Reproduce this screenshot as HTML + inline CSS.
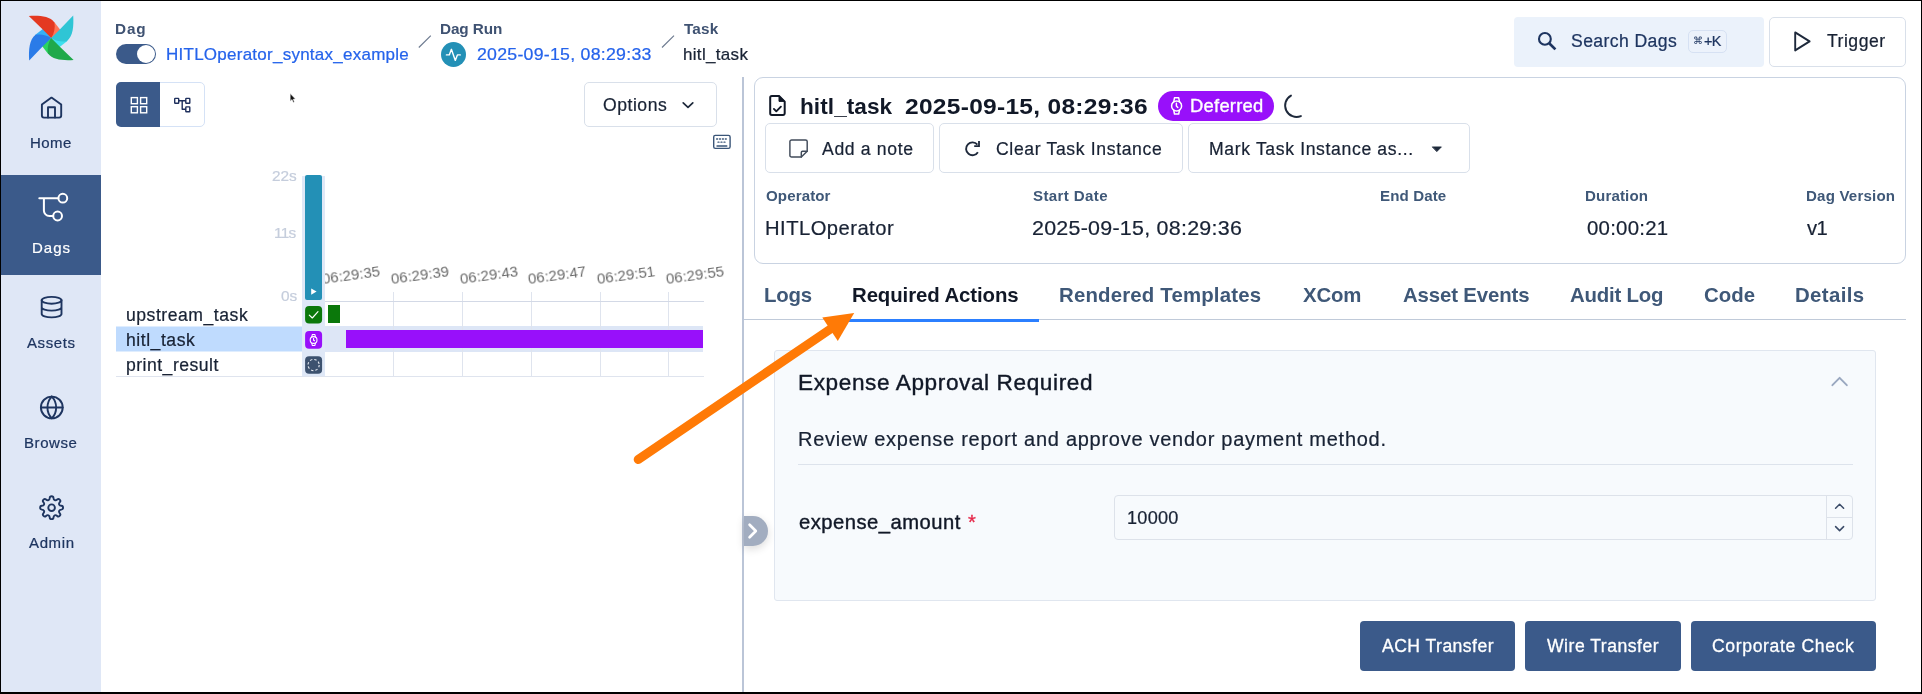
<!DOCTYPE html>
<html><head><meta charset="utf-8">
<style>
*{box-sizing:border-box;margin:0;padding:0}
html,body{width:1922px;height:694px;overflow:hidden;background:#fff}
body{font-family:"Liberation Sans",sans-serif;color:#1e293b;position:relative}
.abs{position:absolute}
.t{position:absolute;white-space:nowrap;line-height:1;will-change:transform}
svg{position:absolute;overflow:visible}
#frame{position:absolute;left:0;top:0;width:1922px;height:694px;border:1px solid #000;border-bottom-width:2px;z-index:50;pointer-events:none}
#side{position:absolute;left:1px;top:1px;width:100px;height:692px;background:#dfe7f6}
.btn{position:absolute;border:1px solid #d9e0ea;border-radius:5px;background:#fff}
.solid{position:absolute;background:#3b5a8a;border-radius:4px}
.tl{position:absolute;white-space:nowrap;line-height:1;font-size:15px;color:#6b6b6b;transform-origin:0 100%;transform:rotate(-7.8deg);will-change:transform}
.gl{position:absolute;width:1px;background:#dfe4ee;top:292px;height:85px}
</style></head><body>
<div id="side">
  <div class="abs" style="left:0;top:174px;width:100px;height:100px;background:#3b5a8a"></div>
</div>
<!-- logo -->
<svg style="left:0;top:0" width="102" height="76" viewBox="0 0 102 76">
 <g transform="translate(51.2,38)">
  <g transform="rotate(0)"><path d="M1,-16.4 L3.2,-15.8 L9.4,-7.8 L0,0.4 L-1,-8 Z" fill="#ff7557"/></g>
  <g transform="rotate(90)"><path d="M1,-16.4 L3.2,-15.8 L9.4,-7.8 L0,0.4 L-1,-8 Z" fill="#3de0ee"/></g>
  <g transform="rotate(180)"><path d="M1,-16.4 L3.2,-15.8 L9.4,-7.8 L0,0.4 L-1,-8 Z" fill="#2bd45f"/></g>
  <g transform="rotate(270)"><path d="M1,-16.4 L3.2,-15.8 L9.4,-7.8 L0,0.4 L-1,-8 Z" fill="#35b0f5"/></g>
  <g transform="rotate(0)"><path d="M-22.4,-22 C-12,-22.6 -1.5,-22 3.2,-15.6 C4.2,-10.5 3,-4.5 0,0 L-8.4,-8.6 Z" fill="#e43921"/></g>
  <g transform="rotate(90)"><path d="M-22.4,-22 C-12,-22.6 -1.5,-22 3.2,-15.6 C4.2,-10.5 3,-4.5 0,0 L-8.4,-8.6 Z" fill="#2fc5d5"/></g>
  <g transform="rotate(180)"><path d="M-22.4,-22 C-12,-22.6 -1.5,-22 3.2,-15.6 C4.2,-10.5 3,-4.5 0,0 L-8.4,-8.6 Z" fill="#1fa94a"/></g>
  <g transform="rotate(270)"><path d="M-22.4,-22 C-12,-22.6 -1.5,-22 3.2,-15.6 C4.2,-10.5 3,-4.5 0,0 L-8.4,-8.6 Z" fill="#2a7be8"/></g>
 </g>
</svg>
<!-- sidebar icons -->
<svg style="left:0;top:0" width="102" height="694" viewBox="0 0 102 694" fill="none" stroke="#1e3560" stroke-width="1.9" stroke-linecap="round" stroke-linejoin="round">
 <!-- home -->
 <path d="M41.9,104.6 L51.5,97.6 L61.2,104.6 V115.6 a2,2 0 0 1 -2,2 H43.9 a2,2 0 0 1 -2,-2 Z"/>
 <path d="M48,117.6 V107.2 h7 V117.6"/>
 <!-- dags -->
 <g stroke="#fff" stroke-width="2">
  <circle cx="62.8" cy="198.2" r="4.4"/><circle cx="57.6" cy="216" r="4.4"/>
  <path d="M39.3,198.2 H58.4 M43.9,198.2 V210.5 a5.5,5.5 0 0 0 5.5,5.5 H53.2"/>
 </g>
 <!-- assets -->
 <ellipse cx="51.6" cy="300.3" rx="9.9" ry="3.4"/>
 <path d="M41.7,300.3 V314 a9.9,3.4 0 0 0 19.8,0 V300.3 M41.7,307.2 a9.9,3.4 0 0 0 19.8,0"/>
 <!-- browse -->
 <circle cx="51.8" cy="407.5" r="10.9"/>
 <path d="M40.9,407.5 H62.7 M51.8,396.6 a15.8,15.8 0 0 0 0,21.8 a15.8,15.8 0 0 0 0,-21.8"/>
 <!-- admin -->
 <circle cx="51.6" cy="507.7" r="3.3"/>
 <path id="gear" d="M49.72,497.94 Q49.79,496.24 51.60,496.24 Q53.41,496.24 53.48,497.94 Q53.54,499.63 54.74,500.13 Q55.94,500.62 57.18,499.47 Q58.42,498.32 59.70,499.60 Q60.98,500.88 59.83,502.12 Q58.68,503.36 59.17,504.56 Q59.67,505.76 61.36,505.82 Q63.06,505.89 63.06,507.70 Q63.06,509.51 61.36,509.58 Q59.67,509.64 59.17,510.84 Q58.68,512.04 59.83,513.28 Q60.98,514.52 59.70,515.80 Q58.42,517.08 57.18,515.93 Q55.94,514.78 54.74,515.27 Q53.54,515.77 53.48,517.46 Q53.41,519.16 51.60,519.16 Q49.79,519.16 49.72,517.46 Q49.66,515.77 48.46,515.27 Q47.26,514.78 46.02,515.93 Q44.78,517.08 43.50,515.80 Q42.22,514.52 43.37,513.28 Q44.52,512.04 44.03,510.84 Q43.53,509.64 41.84,509.58 Q40.14,509.51 40.14,507.70 Q40.14,505.89 41.84,505.82 Q43.53,505.76 44.03,504.56 Q44.52,503.36 43.37,502.12 Q42.22,500.88 43.50,499.60 Q44.78,498.32 46.02,499.47 Q47.26,500.62 48.46,500.13 Q49.66,499.63 49.72,497.94 Z"/>
</svg>

<!-- header -->
<div class="abs" style="left:116px;top:44px;width:40px;height:20px;border-radius:10px;background:#3b5a8a"><div class="abs" style="left:21.4px;top:1.1px;width:17.5px;height:17.8px;border-radius:9px;background:#fff"></div></div>
<svg style="left:0;top:0" width="760" height="76" viewBox="0 0 760 76" fill="none" stroke="#6f7d92" stroke-width="1.2">
 <path d="M418.8,47.5 L430.8,35.6 M662,47.5 L674,35.6"/>
 <circle cx="453.5" cy="54.5" r="12.5" fill="#2390b6" stroke="none"/>
 <path d="M446.4,54.9 h2.9 l2.1,-5.6 l3.9,11.1 l2.1,-5.5 h2.9" stroke="#fff" stroke-width="1.4" stroke-linejoin="round" stroke-linecap="round"/>
</svg>

<div class="abs" style="left:1514px;top:17px;width:250px;height:50px;border-radius:4px;background:#ebf2fb"></div>
<div class="abs" style="left:1688px;top:30px;width:39px;height:22.5px;border:1px solid #d6e1f3;border-radius:5px;background:#ecf2fb"></div>
<div class="btn" style="left:1769px;top:17px;width:137px;height:50px"></div>
<svg style="left:1500px;top:0" width="422" height="76" viewBox="1500 0 422 76" fill="none" stroke="#1e3560" stroke-width="2.1" stroke-linecap="round" stroke-linejoin="round">
 <circle cx="1544.9" cy="38.9" r="5.9"/><path d="M1549.2,43.2 L1555.4,49.4" stroke-width="2.7" stroke-linecap="butt"/>
 <path d="M1795.2,32.4 L1809.6,41.4 L1795.2,50.4 Z" stroke="#1e293b" stroke-width="1.9"/>
</svg>

<!-- left panel -->
<div class="btn" style="left:116px;top:82px;width:89px;height:45px;border-color:#d5e2f6"></div>
<div class="abs" style="left:116px;top:82px;width:44px;height:45px;background:#3b5a8a;border-radius:5px 0 0 5px"></div>
<svg style="left:105px;top:75px" width="240" height="60" viewBox="105 75 240 60" fill="none" stroke-width="1.4">
 <g stroke="#fff"><rect x="131.3" y="97.6" width="6.1" height="6.1"/><rect x="140.6" y="97.6" width="6.1" height="6.1"/><rect x="131.3" y="106.7" width="6.1" height="6.1"/><rect x="140.6" y="106.7" width="6.1" height="6.1"/></g>
 <g stroke="#1e2f5c" stroke-linejoin="round"><rect x="174.7" y="98.4" width="4" height="4.8" rx="0.5"/><rect x="185.8" y="98.4" width="4" height="4.8" rx="0.5"/><rect x="185.8" y="106.9" width="4" height="4.8" rx="0.5"/><path d="M178.7,100.8 H185.8 M182.2,100.8 V109.3 H185.8"/></g>
 <!-- cursor -->
 <path d="M290.2,93.6 L290.2,101.2 L292,99.6 L293.3,102.4 L294.4,101.9 L293.2,99.2 L295.4,99 Z" fill="#111" stroke="#fff" stroke-width="0.5"/>
</svg>
<div class="btn" style="left:584px;top:82px;width:133px;height:45px"></div>
<svg style="left:570px;top:75px" width="200" height="85" viewBox="570 75 200 85" fill="none" stroke="#1e293b" stroke-width="1.7" stroke-linecap="round" stroke-linejoin="round">
 <path d="M683.2,102.8 L688,107.4 L692.8,102.8"/>
 <g stroke="#3a5578" stroke-width="1.4"><rect x="713.7" y="135.4" width="16.4" height="13" rx="1.6"/><path d="M717,146 H726.8" /><path d="M716.6,139 h1 M719.5,139 h1 M722.4,139 h1 M725.3,139 h1 M718,142.2 h1 M721,142.2 h1 M724,142.2 h1" stroke-width="1.3"/></g>
</svg>

<!-- gantt -->
<svg style="left:116px;top:320px" width="186" height="40" viewBox="0 0 186 40"><rect x="0" y="6.5" width="186" height="25" fill="#bfdbfe"/></svg>
<div class="abs" style="left:302px;top:176px;width:23px;height:201px;background:#dfe8f7"></div>
<div class="abs" style="left:325px;top:326px;width:378px;height:26px;background:#dde6f6"></div>
<div class="abs" style="left:305px;top:175px;width:17px;height:124.5px;background:#2390b6;border-radius:2px"></div>
<div class="gl" style="left:393px"></div><div class="gl" style="left:462px"></div><div class="gl" style="left:531px"></div><div class="gl" style="left:599.5px"></div><div class="gl" style="left:668px"></div>
<div class="abs" style="left:325px;top:301px;width:378.5px;height:1.3px;background:#d3d9e6"></div>
<div class="abs" style="left:116px;top:376px;width:587.5px;height:1px;background:#dfe4ee"></div>
<div class="abs" style="left:328.2px;top:305px;width:12.2px;height:18px;background:#0b780b"></div>
<div class="abs" style="left:346.2px;top:330px;width:356.8px;height:18.3px;background:#9810fa"></div>
<div class="abs" style="left:325px;top:255px;width:420px;height:45px;overflow:hidden">
 <div class="tl" style="left:-2.2px;top:15.8px">06:29:35</div>
 <div class="tl" style="left:67.0px;top:15.8px">06:29:39</div>
 <div class="tl" style="left:135.7px;top:15.8px">06:29:43</div>
 <div class="tl" style="left:204.3px;top:15.8px">06:29:47</div>
 <div class="tl" style="left:273.2px;top:15.8px">06:29:51</div>
 <div class="tl" style="left:341.7px;top:15.8px">06:29:55</div>
</div>
<svg style="left:300px;top:280px" width="30" height="100" viewBox="300 280 30 100" fill="none" stroke-linecap="round" stroke-linejoin="round">
 <path d="M311.2,288.4 L316.6,291.6 L311.2,294.8 Z" fill="#fff"/>
 <rect x="305.1" y="306" width="17" height="17.6" rx="4" fill="#0b780b"/>
 <path d="M309.3,315.2 L312.3,318 L318,311.7" stroke="#fff" stroke-width="1.15"/>
 <rect x="305.1" y="331" width="17" height="17.8" rx="4" fill="#9810fa"/>
 <g stroke="#fff" stroke-width="1.1"><circle cx="313.6" cy="340" r="3.4"/><path d="M311.8,336.9 l0.5,-2.4 h2.6 l0.5,2.4 M311.8,343.1 l0.5,2.4 h2.6 l0.5,-2.4 M313.6,338.4 v1.8 l0.9,0.6"/></g>
 <rect x="305.1" y="356.2" width="17" height="17.6" rx="4" fill="#3d526f"/>
 <circle cx="313.6" cy="365" r="5.6" stroke="#e6ebf2" stroke-width="1.1" stroke-dasharray="2.4 2" stroke-linecap="butt"/>
</svg>

<div class="abs" style="left:742.3px;top:77px;width:1.7px;height:616px;background:#bbc5d7"></div>

<!-- right card -->
<div class="abs" style="left:754px;top:77px;width:1152px;height:186.5px;border:1px solid #c9d3e2;border-radius:9px"></div>
<div class="abs" style="left:1158px;top:91px;width:116px;height:30px;border-radius:15px;background:#9810fa"></div>
<div class="btn" style="left:765px;top:123px;width:169px;height:50px"></div>
<div class="btn" style="left:939px;top:123px;width:244px;height:50px"></div>
<div class="btn" style="left:1188px;top:123px;width:281.5px;height:50px"></div>
<svg style="left:750px;top:75px" width="750" height="110" viewBox="750 75 750 110" fill="none" stroke="#111827" stroke-width="1.7" stroke-linecap="round" stroke-linejoin="round">
 <!-- file check -->
 <g stroke-width="2"><path d="M779,95.9 H771.8 a1.6,1.6 0 0 0 -1.6,1.6 V113.3 a1.6,1.6 0 0 0 1.6,1.6 H783.1 a1.6,1.6 0 0 0 1.6,-1.6 V101.6 Z"/><path d="M779,96.2 V101.4 H784.4 Z" fill="#111827" stroke-width="1"/><path d="M773.9,108.9 l2.4,2.4 l4.6,-4.6" stroke-width="1.9"/></g>
 <!-- note -->
 <g stroke="#414b5a" stroke-width="1.45"><path d="M807.2,151.2 V141.6 a1.7,1.7 0 0 0 -1.7,-1.7 H791.6 a1.7,1.7 0 0 0 -1.7,1.7 V155.4 a1.7,1.7 0 0 0 1.7,1.7 H801.3 Z"/><path d="M801.3,157.1 V152.4 a1.2,1.2 0 0 1 1.2,-1.2 H807.2"/></g>
 <!-- refresh -->
 <g stroke="#1e293b" stroke-width="1.9" stroke-linecap="butt" stroke-linejoin="miter"><path d="M977.4,144.7 A6.4,6.4 0 1 0 977.9,152.2"/><path d="M979,140.9 V146.1 H974.2" stroke-width="1.8"/></g>
 <!-- watch in badge -->
 <g stroke="#fff" stroke-width="1.5"><circle cx="1176.6" cy="105.9" r="5"/><path d="M1173.7,101.8 l0.8,-4 h4.2 l0.8,4 M1173.7,110 l0.8,4 h4.2 l0.8,-4 M1176.4,103.3 v2.6 l1.4,1.5"/></g>
 <!-- spinner -->
 <path d="M1291,95.6 A11.4,11.4 0 0 0 1300.9,116.1" stroke="#1e293b" stroke-width="1.9"/>
 <!-- caret -->
 <path d="M1432.6,146.9 H1441.4 L1437,151.4 Z" fill="#1e293b" stroke="#1e293b" stroke-width="0.8"/>
</svg>

<!-- tabs -->
<div class="abs" style="left:744px;top:319px;width:1162px;height:1.2px;background:#c0cad9"></div>
<div class="abs" style="left:832px;top:319px;width:207px;height:3px;background:#2b7fff"></div>

<!-- accordion -->
<div class="abs" style="left:774px;top:350px;width:1102px;height:251px;border:1px solid #e0e6ef;border-radius:3px;background:#f7fafd"></div>
<div class="abs" style="left:798px;top:464px;width:1055px;height:1px;background:#dde3ec"></div>
<div class="abs" style="left:1114px;top:495px;width:739px;height:45px;border:1px solid #dde2ea;border-radius:4px"></div>
<div class="abs" style="left:1826px;top:495px;width:1px;height:45px;background:#dde2ea"></div>
<div class="abs" style="left:1826px;top:517px;width:27px;height:1px;background:#dde2ea"></div>
<svg style="left:1760px;top:340px" width="162" height="220" viewBox="1760 340 162 220" fill="none" stroke-linecap="round" stroke-linejoin="round">
 <path d="M1832.4,385.2 L1839.6,377.8 L1846.8,385.2" stroke="#9aa8c0" stroke-width="1.9"/>
 <path d="M1835.6,508.2 L1839.6,504.2 L1843.6,508.2 M1835.6,526.6 L1839.6,530.6 L1843.6,526.6" stroke="#3a4b68" stroke-width="1.5"/>
</svg>

<div class="solid" style="left:1360px;top:620.6px;width:155px;height:50px"></div>
<div class="solid" style="left:1525px;top:620.6px;width:156px;height:50px"></div>
<div class="solid" style="left:1691px;top:620.6px;width:185px;height:50px"></div>

<!-- handle -->
<div class="abs" style="left:744px;top:516px;width:24px;height:29.5px;border-radius:0 15px 15px 0;background:#a2adc0;box-shadow:0 3px 9px rgba(0,0,0,.14)"></div>
<svg style="left:740px;top:510px" width="40" height="40" viewBox="740 510 40 40" fill="none" stroke="#fff" stroke-width="2.7" stroke-linecap="round" stroke-linejoin="round"><path d="M749.6,524.7 L755.8,531 L749.6,537.3"/></svg>

<!-- arrow -->
<svg style="left:600px;top:290px;z-index:20" width="300" height="200" viewBox="600 290 300 200">
 <path d="M638.2,459.5 L834,326.6" stroke="#ff7a06" stroke-width="9" stroke-linecap="round" fill="none"/>
 <path d="M854.2,313 L822.3,317.6 L837.8,341 Z" fill="#ff7a06"/>
</svg>

<div class="t" style="left:30.10px;top:135px;font-size:15px;color:#1e3560;letter-spacing:0.443px;-webkit-text-stroke:0.22px #1e3560;">Home</div>
<div class="t" style="left:31.50px;top:240px;font-size:15px;color:#fff;letter-spacing:1.028px;-webkit-text-stroke:0.22px #fff;">Dags</div>
<div class="t" style="left:27.40px;top:335px;font-size:15px;color:#1e3560;letter-spacing:0.597px;-webkit-text-stroke:0.22px #1e3560;">Assets</div>
<div class="t" style="left:24.00px;top:435px;font-size:15px;color:#1e3560;letter-spacing:0.585px;-webkit-text-stroke:0.22px #1e3560;">Browse</div>
<div class="t" style="left:29.00px;top:535px;font-size:15px;color:#1e3560;letter-spacing:0.631px;-webkit-text-stroke:0.22px #1e3560;">Admin</div>
<div class="t" style="left:115.30px;top:21px;font-size:15.3px;font-weight:bold;color:#3f5272;letter-spacing:0.873px;">Dag</div>
<div class="t" style="left:165.90px;top:46px;font-size:17px;color:#2563eb;letter-spacing:0.251px;-webkit-text-stroke:0.22px #2563eb;">HITLOperator_syntax_example</div>
<div class="t" style="left:440.40px;top:21px;font-size:15.3px;font-weight:bold;color:#3f5272;letter-spacing:-0.107px;">Dag Run</div>
<div class="t" style="left:476.60px;top:46px;font-size:17px;color:#2563eb;letter-spacing:0.250px;transform:scaleX(1.0421);transform-origin:0 50%;-webkit-text-stroke:0.22px #2563eb;">2025-09-15, 08:29:33</div>
<div class="t" style="left:684.30px;top:21px;font-size:15.3px;font-weight:bold;color:#3f5272;letter-spacing:0.159px;">Task</div>
<div class="t" style="left:683.30px;top:46px;font-size:17px;color:#182234;letter-spacing:0.317px;-webkit-text-stroke:0.22px #182234;">hitl_task</div>
<div class="t" style="left:1570.70px;top:33px;font-size:17.6px;color:#1e3560;letter-spacing:0.409px;-webkit-text-stroke:0.22px #1e3560;">Search Dags</div>
<div class="t" style="left:1693.00px;top:36px;font-size:10px;color:#1e3560;letter-spacing:0.000px;font-family:"DejaVu Sans",sans-serif;-webkit-text-stroke:0;">⌘</div>
<div class="t" style="left:1703.50px;top:34px;font-size:14.4px;color:#1e3560;letter-spacing:-0.704px;-webkit-text-stroke:0.22px #1e3560;">+K</div>
<div class="t" style="left:1826.50px;top:33px;font-size:17.6px;color:#182234;letter-spacing:0.497px;-webkit-text-stroke:0.22px #182234;">Trigger</div>
<div class="t" style="left:603.40px;top:97px;font-size:17.6px;color:#182234;letter-spacing:0.527px;-webkit-text-stroke:0.22px #182234;">Options</div>
<div class="t" style="left:271.90px;top:168px;font-size:15.4px;color:#c5cddc;letter-spacing:-0.010px;-webkit-text-stroke:0.22px #c5cddc;">22s</div>
<div class="t" style="left:274.40px;top:225px;font-size:15.4px;color:#c5cddc;letter-spacing:-0.688px;-webkit-text-stroke:0.22px #c5cddc;">11s</div>
<div class="t" style="left:280.50px;top:288px;font-size:15.4px;color:#c5cddc;letter-spacing:-0.060px;-webkit-text-stroke:0.22px #c5cddc;">0s</div>
<div class="t" style="left:125.70px;top:307px;font-size:17.6px;color:#182234;letter-spacing:0.526px;-webkit-text-stroke:0.22px #182234;">upstream_task</div>
<div class="t" style="left:125.70px;top:332px;font-size:17.6px;color:#182234;letter-spacing:0.532px;-webkit-text-stroke:0.22px #182234;">hitl_task</div>
<div class="t" style="left:125.70px;top:357px;font-size:17.6px;color:#182234;letter-spacing:0.478px;-webkit-text-stroke:0.22px #182234;">print_result</div>
<div class="t" style="left:800.30px;top:96px;font-size:22.6px;font-weight:bold;color:#111827;letter-spacing:0.062px;">hitl_task</div>
<div class="t" style="left:904.50px;top:96px;font-size:22.6px;font-weight:bold;color:#111827;letter-spacing:0.250px;transform:scaleX(1.0864);transform-origin:0 50%;">2025-09-15, 08:29:36</div>
<div class="t" style="left:1190.20px;top:97px;font-size:18.4px;color:#fff;letter-spacing:0.254px;-webkit-text-stroke:0.35px #fff;">Deferred</div>
<div class="t" style="left:822.10px;top:141px;font-size:17.6px;color:#182234;letter-spacing:0.653px;-webkit-text-stroke:0.22px #182234;">Add a note</div>
<div class="t" style="left:995.90px;top:141px;font-size:17.6px;color:#182234;letter-spacing:0.643px;-webkit-text-stroke:0.22px #182234;">Clear Task Instance</div>
<div class="t" style="left:1209.00px;top:141px;font-size:17.6px;color:#182234;letter-spacing:0.643px;-webkit-text-stroke:0.22px #182234;">Mark Task Instance as...</div>
<div class="t" style="left:765.70px;top:188px;font-size:15.1px;font-weight:bold;color:#3f5878;letter-spacing:0.104px;">Operator</div>
<div class="t" style="left:1032.80px;top:188px;font-size:15.1px;font-weight:bold;color:#3f5878;letter-spacing:0.366px;">Start Date</div>
<div class="t" style="left:1380.40px;top:188px;font-size:15.1px;font-weight:bold;color:#3f5878;letter-spacing:0.111px;">End Date</div>
<div class="t" style="left:1585.00px;top:188px;font-size:15.1px;font-weight:bold;color:#3f5878;letter-spacing:0.139px;">Duration</div>
<div class="t" style="left:1805.60px;top:188px;font-size:15.1px;font-weight:bold;color:#3f5878;letter-spacing:0.178px;">Dag Version</div>
<div class="t" style="left:764.70px;top:218px;font-size:20.2px;color:#182234;letter-spacing:0.474px;-webkit-text-stroke:0.22px #182234;">HITLOperator</div>
<div class="t" style="left:1031.74px;top:218px;font-size:20.2px;color:#182234;letter-spacing:0.250px;transform:scaleX(1.0606);transform-origin:0 50%;-webkit-text-stroke:0.22px #182234;">2025-09-15, 08:29:36</div>
<div class="t" style="left:1586.60px;top:218px;font-size:20.2px;color:#182234;letter-spacing:0.250px;transform:scaleX(1.0099);transform-origin:0 50%;-webkit-text-stroke:0.22px #182234;">00:00:21</div>
<div class="t" style="left:1807.20px;top:218px;font-size:20.2px;color:#182234;letter-spacing:-0.494px;-webkit-text-stroke:0.22px #182234;">v1</div>
<div class="t" style="left:763.50px;top:285px;font-size:20.4px;font-weight:bold;color:#3f5878;letter-spacing:-0.189px;">Logs</div>
<div class="t" style="left:851.60px;top:285px;font-size:20.4px;font-weight:bold;color:#111827;letter-spacing:-0.098px;">Required Actions</div>
<div class="t" style="left:1059.20px;top:285px;font-size:20.4px;font-weight:bold;color:#3f5878;letter-spacing:0.175px;">Rendered Templates</div>
<div class="t" style="left:1303.20px;top:285px;font-size:20.4px;font-weight:bold;color:#3f5878;letter-spacing:-0.194px;">XCom</div>
<div class="t" style="left:1402.50px;top:285px;font-size:20.4px;font-weight:bold;color:#3f5878;letter-spacing:-0.139px;">Asset Events</div>
<div class="t" style="left:1570.20px;top:285px;font-size:20.4px;font-weight:bold;color:#3f5878;letter-spacing:-0.208px;">Audit Log</div>
<div class="t" style="left:1704.30px;top:285px;font-size:20.4px;font-weight:bold;color:#3f5878;letter-spacing:0.021px;">Code</div>
<div class="t" style="left:1795.40px;top:285px;font-size:20.4px;font-weight:bold;color:#3f5878;letter-spacing:0.362px;">Details</div>
<div class="t" style="left:797.60px;top:372px;font-size:22.6px;color:#111827;letter-spacing:0.601px;-webkit-text-stroke:0.4px #111827;">Expense Approval Required</div>
<div class="t" style="left:797.60px;top:429px;font-size:20px;color:#182234;letter-spacing:0.725px;-webkit-text-stroke:0.22px #182234;">Review expense report and approve vendor payment method.</div>
<div class="t" style="left:798.60px;top:512px;font-size:20.2px;color:#111827;letter-spacing:0.494px;-webkit-text-stroke:0.4px #111827;">expense_amount</div>
<div class="t" style="left:967.60px;top:512px;font-size:20.2px;color:#e5284a;letter-spacing:0.000px;-webkit-text-stroke:0.3px #e5284a;">*</div>
<div class="t" style="left:1127.07px;top:510px;font-size:17.6px;color:#182234;letter-spacing:0.250px;transform:scaleX(1.0297);transform-origin:0 50%;-webkit-text-stroke:0.22px #182234;">10000</div>
<div class="t" style="left:1381.80px;top:638px;font-size:17.6px;color:#fff;letter-spacing:0.452px;-webkit-text-stroke:0.3px #fff;">ACH Transfer</div>
<div class="t" style="left:1546.80px;top:638px;font-size:17.6px;color:#fff;letter-spacing:0.505px;-webkit-text-stroke:0.3px #fff;">Wire Transfer</div>
<div class="t" style="left:1712.20px;top:638px;font-size:17.6px;color:#fff;letter-spacing:0.629px;-webkit-text-stroke:0.3px #fff;">Corporate Check</div>
<div id="frame"></div>
</body></html>
